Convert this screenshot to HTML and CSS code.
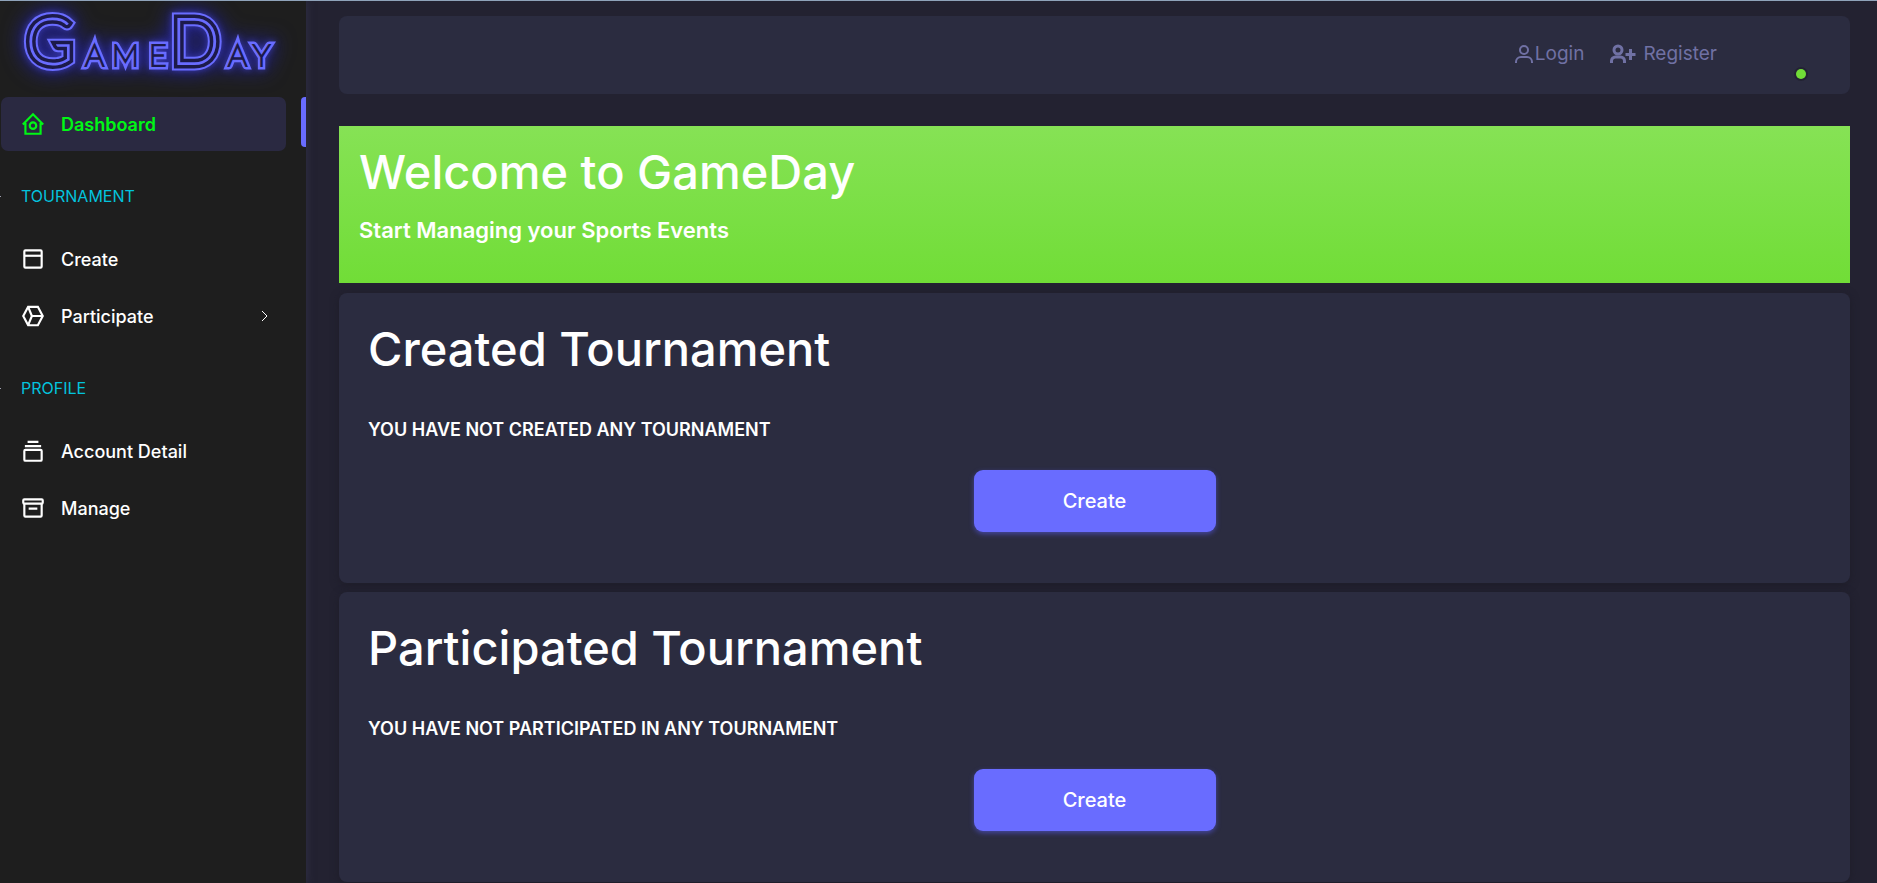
FILE: index.html
```html
<!DOCTYPE html>
<html lang="en">
<head>
<meta charset="utf-8">
<meta name="viewport" content="width=device-width, initial-scale=1">
<title>GameDay - Dashboard</title>
<link rel="stylesheet" href="styles.css">
</head>
<body>
<div class="layout">
  <aside class="sidebar">
    <a class="brand" href="#" aria-label="GameDay">
      <svg class="logo" width="306" height="96" viewBox="0 0 306 96">
        <g class="logo-glow">
          <g class="line-outer"><text id="caps" class="caps" y="63"><tspan x="26">G</tspan><tspan x="171">D</tspan></text></g>
          <g class="line-outer small"><text id="letters" class="letters" y="65"><tspan x="85">A</tspan><tspan x="112">M</tspan><tspan x="149">E</tspan><tspan x="228">A</tspan><tspan x="253">Y</tspan></text></g>
        </g>
        <use class="line-gap" href="#caps"/>
        <use class="line-core" href="#caps"/>
        <use class="line-gap small" href="#letters"/>
      </svg>
    </a>
    <nav class="menu">
      <a class="item active" href="#">
        <svg class="icon" viewBox="0 0 24 24"><path d="M2.600 12.400 12 3l9.400 9.400M5 11v10h14V11"/><circle cx="12" cy="13.500" r="3"/></svg>
        <span>Dashboard</span>
      </a>
      <h2 class="section">TOURNAMENT</h2>
      <a class="item" href="#">
        <svg class="icon" viewBox="0 0 24 24"><rect x="4" y="4" width="16" height="16" rx="1"/><path d="M4 9h16"/></svg>
        <span>Create</span>
      </a>
      <a class="item" href="#">
        <svg class="icon" viewBox="0 0 24 24"><path d="M7.500 3.500h9L21 12l-4.500 8.500h-9L3 12zM7.500 3.500 11 12l-3.500 8.500M11 12h10"/></svg>
        <span>Participate</span>
        <svg class="chevron" viewBox="0 0 8 12"><path d="m1 1 5 5-5 5"/></svg>
      </a>
      <h2 class="section">PROFILE</h2>
      <a class="item" href="#">
        <svg class="icon" viewBox="0 0 24 24"><rect x="4" y="11" width="16" height="10" rx="1"/><path d="M4.500 7.500h15M7 3.500h10"/></svg>
        <span>Account Detail</span>
      </a>
      <a class="item" href="#">
        <svg class="icon" viewBox="0 0 24 24"><rect x="3" y="4" width="18" height="4" rx="1"/><path d="M4 8v11a1 1 0 0 0 1 1h14a1 1 0 0 0 1-1V8M8 12.500h8"/></svg>
        <span>Manage</span>
      </a>
    </nav>
  </aside>
  <main class="content">
    <header class="navbar">
      <a class="login" href="#">
        <svg class="user-icon" viewBox="0 0 18 20"><circle cx="9" cy="6" r="4"/><path d="M1 19v-1a5 5 0 0 1 5-5h6a5 5 0 0 1 5 5v1"/></svg>
        <span>Login</span>
      </a>
      <a class="register" href="#">
        <svg class="add-icon" viewBox="0 0 26 20"><circle cx="8" cy="6" r="4"/><path d="M1.500 19v-2a4 4 0 0 1 4-4h5a4 4 0 0 1 4 4v2M20.500 5v11M15.500 10.500h10"/></svg>
        <span>Register</span>
      </a>
      <span class="status" role="img" aria-label="Online"></span>
    </header>
    <section class="banner">
      <h1>Welcome to GameDay</h1>
      <p>Start Managing your Sports Events</p>
    </section>
    <section class="card">
      <h1>Created Tournament</h1>
      <p>YOU HAVE NOT CREATED ANY TOURNAMENT</p>
      <button type="button">Create</button>
    </section>
    <section class="card">
      <h1>Participated Tournament</h1>
      <p>YOU HAVE NOT PARTICIPATED IN ANY TOURNAMENT</p>
      <button type="button">Create</button>
    </section>
  </main>
</div>
</body>
</html>
```
FILE: styles.css
```css
* {
  box-sizing: border-box;
}

body {
  margin: 0;
  border-top: 1px solid #8fa3ba;
  background: #232231;
  color: #fff;
  font-family: Inter, "Liberation Sans", sans-serif;
  font-size: 18px;
}

h1, h2, p {
  margin: 0;
}

a {
  color: inherit;
  text-decoration: none;
}

svg {
  display: block;
  flex: none;
  fill: none;
  stroke: currentColor;
  stroke-width: 2;
}

.layout {
  display: flex;
  min-height: calc(100vh - 1px);
}

.sidebar {
  flex: none;
  width: 306px;
  background: #1e1e1e;
  box-shadow: 0 0 8px #32324a;
}

.brand {
  display: block;
}

.logo {
  font-family: Lato, sans-serif;
  font-weight: 100;
}

.caps {
  font-size: 64px;
}

.letters {
  font-size: 30px;
}

.logo-glow {
  filter: drop-shadow(0 0 3px #3a3aa8) drop-shadow(0 0 10px #2020a0);
}

.line-outer {
  stroke: #696cff;
  stroke-width: 13px;
}

.line-outer.small {
  stroke-width: 7px;
}

.line-gap {
  stroke: #1c1a4a;
  stroke-width: 9px;
}

.line-gap.small {
  stroke-width: 2px;
}

.line-core {
  stroke: #696cff;
  stroke-width: 2px;
}

.menu {
  display: flex;
  flex-direction: column;
  gap: 3px;
}

.item {
  position: relative;
  display: flex;
  align-items: center;
  gap: 15px;
  height: 54px;
  margin: 0 20px 0 1px;
  padding: 0 17px 0 19px;
  border-radius: 7px;
  font-weight: 500;
}

.item.active {
  background: #2a2941;
  color: #00f715;
  font-weight: 600;
}

.item.active::after {
  content: "";
  position: absolute;
  top: 0;
  right: -20px;
  width: 5px;
  height: 50px;
  border-radius: 4px 0 0 4px;
  background: #696cff;
}

.icon {
  width: 26px;
  height: 26px;
}

.chevron {
  width: 8px;
  height: 12px;
  margin-left: auto;
  stroke-width: 1;
}

.section {
  display: flex;
  align-items: center;
  height: 20px;
  margin: 32px 0 23px;
  color: #03c3dd;
  font-size: 16px;
  font-weight: 400;
}

.section::before {
  content: "";
  width: 1px;
  height: 1px;
  margin-right: 20px;
  background: #a0a0b0;
}

.content {
  flex: 1;
  padding: 15px 27px 0 33px;
}

.navbar {
  display: flex;
  align-items: center;
  height: 78px;
  margin-bottom: 32px;
  padding: 0 44px 3px;
  border-radius: 8px;
  background: #2b2c40;
  color: #7071a4;
  font-size: 19px;
}

.login, .register {
  display: flex;
  align-items: center;
}

.login {
  gap: 2px;
  margin-left: auto;
}

.register {
  gap: 7px;
  margin-left: 26px;
}

.user-icon {
  width: 18px;
  height: 20px;
}

.add-icon {
  width: 26px;
  height: 20px;
  stroke-width: 3;
}

.status {
  align-self: flex-end;
  width: 10px;
  height: 10px;
  margin: 0 0 12px 79px;
  border-radius: 50%;
  background: #71dd37;
  box-shadow: 0 0 0 2px #232333;
}

.banner {
  height: 157px;
  margin-bottom: 10px;
  padding: 16px 20px;
  background: linear-gradient(#86e255, #71dd37);
}

h1 {
  font-size: 47px;
  font-weight: 500;
  line-height: 60px;
}

.banner p {
  margin-top: 12px;
  font-size: 22px;
  font-weight: 600;
  line-height: 32px;
}

.card {
  display: flex;
  flex-direction: column;
  height: 290px;
  margin-bottom: 9px;
  padding: 26px 29px;
  border-radius: 8px;
  background: #2b2c40;
  box-shadow: 0 2px 8px #1e1d29;
}

.card:last-child {
  margin-bottom: 0;
}

.card p {
  margin: 39px 0 28px;
  font-weight: 600;
  line-height: 24px;
}

.card button {
  align-self: center;
  width: 242px;
  height: 62px;
  border: 0;
  border-radius: 9px;
  background: #696cff;
  box-shadow: 0 2px 5px #4547a0;
  color: #fff;
  font: inherit;
  font-size: 20px;
  font-weight: 500;
}
```
